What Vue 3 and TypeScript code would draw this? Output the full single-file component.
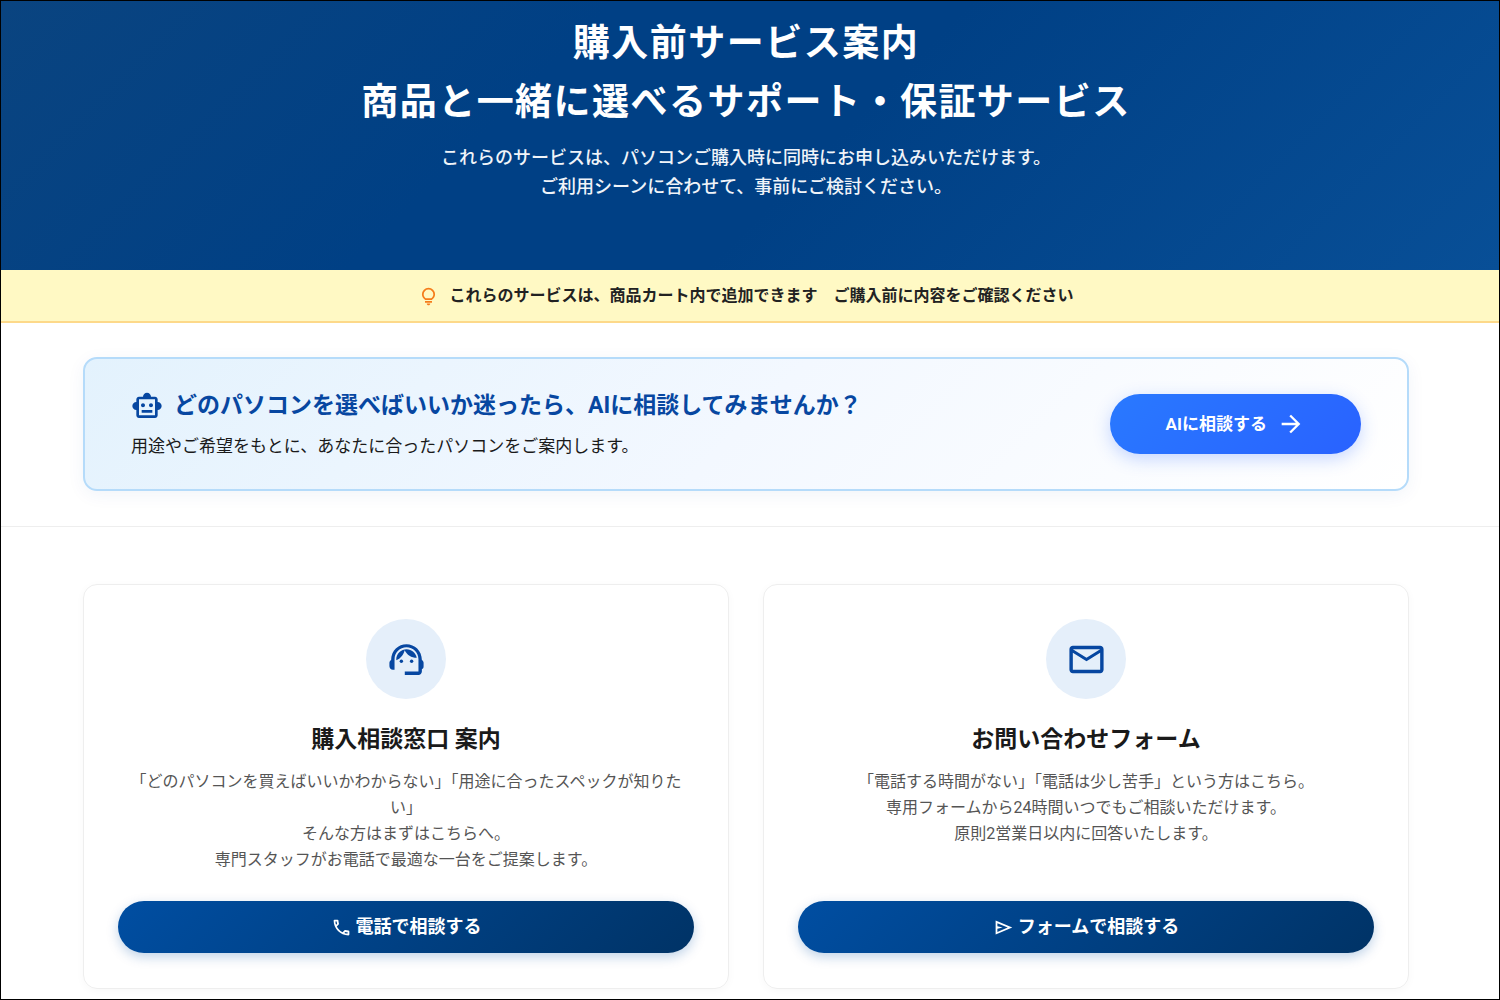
<script setup lang="ts">
interface ContactCard {
  id: string
  title: string
  lines: string[]
  action: string
  icon: string[]
  actionIcon: string
}

const cards: ContactCard[] = [
  {
    id: 'phone',
    title: '購入相談窓口 案内',
    lines: [
      '「どのパソコンを買えばいいかわからない」「用途に合ったスペックが知りたい」',
      'そんな方はまずはこちらへ。',
      '専門スタッフがお電話で最適な一台をご提案します。',
    ],
    action: '電話で相談する',
    icon: [
      'M21 12.22C21 6.73 16.74 3 12 3c-4.69 0-9 3.65-9 9.28-.6.34-1 .98-1 1.72v2c0 1.1.9 2 2 2h1v-6.1c0-3.87 3.13-7 7-7s7 3.13 7 7V19h-8v2h8c1.1 0 2-.9 2-2v-1.22c.59-.31 1-.92 1-1.64v-2.3c0-.7-.41-1.31-1-1.62z',
      'M18 11.03C17.52 8.18 15.04 6 12.05 6c-3.03 0-6.29 2.51-6.03 6.45 2.47-1.01 4.33-3.21 4.86-5.89 1.31 2.63 4 4.44 7.12 4.47z',
      'M10 13a1 1 0 1 1-2 0 1 1 0 0 1 2 0z',
      'M16 13a1 1 0 1 1-2 0 1 1 0 0 1 2 0z',
    ],
    actionIcon:
      'M6.54 5c.06.89.21 1.76.45 2.59l-1.2 1.2c-.41-1.2-.67-2.47-.76-3.79h1.51m9.86 12.02c.85.24 1.72.39 2.6.45v1.49c-1.32-.09-2.59-.35-3.8-.75l1.2-1.19M7.5 3H4c-.55 0-1 .45-1 1 0 9.39 7.61 17 17 17 .55 0 1-.45 1-1v-3.49c0-.55-.45-1-1-1-1.24 0-2.45-.2-3.57-.57-.1-.04-.21-.05-.31-.05-.26 0-.51.1-.71.29l-2.2 2.2c-2.83-1.45-5.15-3.76-6.59-6.59l2.2-2.2c.28-.28.36-.67.25-1.02C8.7 6.45 8.5 5.25 8.5 4c0-.55-.45-1-1-1z',
  },
  {
    id: 'form',
    title: 'お問い合わせフォーム',
    lines: [
      '「電話する時間がない」「電話は少し苦手」という方はこちら。',
      '専用フォームから24時間いつでもご相談いただけます。',
      '原則2営業日以内に回答いたします。',
    ],
    action: 'フォームで相談する',
    icon: [
      'M22 6c0-1.1-.9-2-2-2H4c-1.1 0-2 .9-2 2v12c0 1.1.9 2 2 2h16c1.1 0 2-.9 2-2V6zm-2 0-8 5-8-5h16zm0 12H4V8l8 5 8-5v10z',
    ],
    actionIcon: 'M3 20V4l19 8-19 8zm2-3 11.85-5L5 7v3.5l6 1.5-6 1.5V17z',
  },
]
</script>

<template>
  <div class="page" lang="ja">
    <header class="hero">
      <h1>購入前サービス案内<br />商品と一緒に選べるサポート・保証サービス</h1>
      <p>
        これらのサービスは、パソコンご購入時に同時にお申し込みいただけます。<br />ご利用シーンに合わせて、事前にご検討ください。
      </p>
    </header>

    <div class="notice">
      <svg class="notice-icon" viewBox="0 -960 960 960" aria-hidden="true">
        <path
          d="M480-80q-33 0-56.5-23.5T400-160h160q0 33-23.5 56.5T480-80ZM320-200v-80h320v80H320Zm10-120q-69-41-109.5-110T180-580q0-125 87.5-212.5T480-880q125 0 212.5 87.5T780-580q0 81-40.5 150T630-320H330Zm24-80h252q45-32 69.5-79T700-580q0-92-64-156t-156-64q-92 0-156 64t-64 156q0 54 24.5 101t69.5 79Z"
        />
      </svg>
      <p>これらのサービスは、商品カート内で追加できます　ご購入前に内容をご確認ください</p>
    </div>

    <section class="ai">
      <div class="ai-box">
        <div>
          <h2>
            <svg class="ai-icon" viewBox="0 0 24 24" aria-hidden="true">
              <path
                d="M20 9V7c0-1.1-.9-2-2-2h-3c0-1.66-1.34-3-3-3S9 3.34 9 5H6c-1.1 0-2 .9-2 2v2c-1.66 0-3 1.34-3 3s1.34 3 3 3v4c0 1.1.9 2 2 2h12c1.1 0 2-.9 2-2v-4c1.66 0 3-1.34 3-3s-1.34-3-3-3zm-2 10H6V7h12v12zm-9-6c-.83 0-1.5-.67-1.5-1.5S8.17 10 9 10s1.5.67 1.5 1.5S9.83 13 9 13zm7.5-1.5c0 .83-.67 1.5-1.5 1.5s-1.5-.67-1.5-1.5.67-1.5 1.5-1.5 1.5.67 1.5 1.5zM8 15h8v2H8v-2z"
              />
            </svg>
            <span>どのパソコンを選べばいいか迷ったら、AIに相談してみませんか？</span>
          </h2>
          <p>用途やご希望をもとに、あなたに合ったパソコンをご案内します。</p>
        </div>
        <button class="ai-button" type="button">
          AIに相談する
          <svg class="arrow" viewBox="0 0 24 24" aria-hidden="true">
            <path d="M12 4l-1.41 1.41L16.17 11H4v2h12.17l-5.58 5.59L12 20l8-8z" />
          </svg>
        </button>
      </div>
    </section>

    <main class="cards">
      <article v-for="card in cards" :key="card.id" class="card">
        <div class="badge">
          <svg viewBox="0 0 24 24" aria-hidden="true">
            <path v-for="d in card.icon" :key="d" :d="d" />
          </svg>
        </div>
        <h2>{{ card.title }}</h2>
        <p>
          <template v-for="(line, i) in card.lines" :key="i"><br v-if="i > 0" />{{ line }}</template>
        </p>
        <a class="cta" :href="`#${card.id}`">
          <svg viewBox="0 0 24 24" aria-hidden="true"><path :d="card.actionIcon" /></svg>
          {{ card.action }}
        </a>
      </article>
    </main>
  </div>
</template>

<style>
body {
  margin: 0;
}
</style>

<style scoped>
.page {
  box-sizing: border-box;
  min-height: 100vh;
  border: 1px solid #000;
  background: #fff;
  color: #1a1a1a;
  font-family: Roboto, 'Noto Sans CJK JP', sans-serif;
}

h1,
h2,
p {
  margin: 0;
}

svg {
  flex: none;
  fill: currentColor;
}

.hero {
  padding: 13px 8px 69px 0;
  background: linear-gradient(135deg, #0a4480 0%, #004085 35%, #004085 55%, #084f97 100%);
  color: #fff;
  text-align: center;
}

.hero h1 {
  font-size: 37px;
  font-weight: 700;
  line-height: 59px;
  letter-spacing: 0.04em;
}

.hero p {
  margin-top: 11px;
  font-size: 18px;
  font-weight: 500;
  line-height: 29px;
  color: #f0f4f9;
}

.notice {
  display: flex;
  align-items: center;
  justify-content: center;
  gap: 10px;
  padding: 13px 8px 12px 0;
  border-bottom: 2px solid #fdd98a;
  background: #fff9c4;
}

.notice-icon {
  width: 21px;
  height: 21px;
  color: #f57c1a;
}

.notice p {
  font-size: 16px;
  font-weight: 700;
  line-height: 26px;
  color: #222;
}

.ai {
  padding: 34px 90px 35px 82px;
  border-bottom: 1px solid #eee;
}

.ai-box {
  display: flex;
  align-items: center;
  justify-content: space-between;
  gap: 32px;
  padding: 29px 46px;
  border: 2px solid #b5dbfa;
  border-radius: 14px;
  background: linear-gradient(135deg, #e3f2fd 0%, #f3f8ff 50%, #fff 100%);
  box-shadow: 0 4px 18px rgba(0, 74, 160, 0.06);
}

.ai-box h2 {
  display: flex;
  align-items: center;
  gap: 11px;
  font-size: 23px;
  font-weight: 700;
  line-height: 36px;
  color: #0747a1;
}

.ai-icon {
  width: 32px;
  height: 32px;
}

.ai-box p {
  margin-top: 9px;
  font-size: 17px;
  line-height: 27px;
}

.ai-button {
  display: flex;
  flex: none;
  align-items: center;
  gap: 10px;
  padding: 16px 56px;
  border: 0;
  border-radius: 30px;
  background: linear-gradient(135deg, #2979ff 0%, #2962ff 100%);
  box-shadow: 0 5px 17px rgba(41, 98, 255, 0.25);
  color: #fff;
  font-family: inherit;
  font-size: 17px;
  font-weight: 700;
  line-height: 28px;
  cursor: pointer;
}

.arrow {
  width: 28px;
  height: 28px;
}

.cards {
  display: grid;
  grid-template-columns: repeat(2, 1fr);
  gap: 34px;
  padding: 57px 90px 9px 82px;
}

.card {
  display: flex;
  flex-direction: column;
  align-items: center;
  padding: 34px 34px 35px;
  border: 1px solid #eee;
  border-radius: 14px;
  box-shadow: 0 2px 8px rgba(0, 0, 0, 0.03);
  text-align: center;
}

.badge {
  display: flex;
  align-items: center;
  justify-content: center;
  width: 80px;
  height: 80px;
  border-radius: 50%;
  background: #e5effa;
  color: #0747a1;
}

.badge svg {
  width: 41px;
  height: 41px;
}

.card h2 {
  margin-top: 23px;
  font-size: 23px;
  font-weight: 700;
  line-height: 36px;
}

.card p {
  margin: 11px 0 28px;
  font-size: 16px;
  line-height: 26px;
  color: #555;
}

.cta {
  display: flex;
  align-items: center;
  align-self: stretch;
  justify-content: center;
  gap: 4px;
  margin-top: auto;
  padding: 12px;
  border-radius: 26px;
  background: linear-gradient(135deg, #004ea2 0%, #003366 100%);
  box-shadow: 0 4px 12px rgba(0, 78, 162, 0.25);
  color: #fff;
  font-size: 18px;
  font-weight: 700;
  line-height: 28px;
  text-decoration: none;
}

.cta svg {
  width: 21px;
  height: 21px;
}
</style>
